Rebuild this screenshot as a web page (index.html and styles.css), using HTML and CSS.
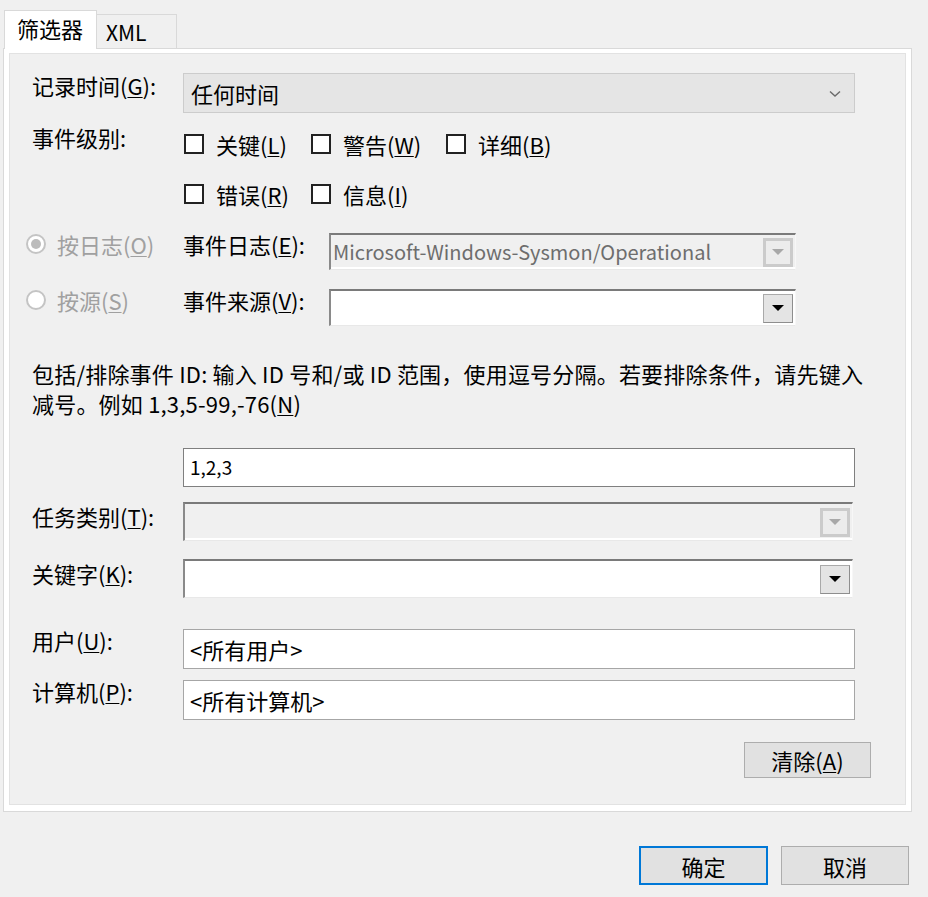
FILE: index.html
```html
<!DOCTYPE html>
<html lang="zh-CN">
<head>
    <meta charset="UTF-8">
    <meta name="viewport" content="width=device-width, initial-scale=1.0">
    <title>筛选当前日志</title>
    <link rel="stylesheet" href="styles.css">
</head>
<body>
    <div class="dialog">
        <div class="tabs">
            <div class="tab active">筛选器</div>
            <div class="tab">XML</div>
        </div>

        <div class="panel">
            <div class="content">
                <div class="row row-time">
                    <div class="label">记录时间(<u>G</u>):</div>
                    <div class="select">
                        <span class="select-text">任何时间</span>
                        <svg class="chevron" width="12" height="8" viewBox="0 0 12 8">
                            <polyline points="1,1.5 6,6 11,1.5" fill="none" stroke="#6a6a6a" stroke-width="1.4"/>
                        </svg>
                    </div>
                </div>

                <div class="row row-level">
                    <div class="label">事件级别:</div>
                    <div class="checks">
                        <div class="check-row">
                            <label class="check"><span class="box"></span><span>关键(<u>L</u>)</span></label>
                            <label class="check"><span class="box"></span><span>警告(<u>W</u>)</span></label>
                            <label class="check"><span class="box"></span><span>详细(<u>B</u>)</span></label>
                        </div>
                        <div class="check-row">
                            <label class="check"><span class="box"></span><span>错误(<u>R</u>)</span></label>
                            <label class="check"><span class="box"></span><span>信息(<u>I</u>)</span></label>
                        </div>
                    </div>
                </div>

                <div class="row row-source first">
                    <div class="radio"><span class="circle checked"></span><span>按日志(<u>O</u>)</span></div>
                    <div class="label sub">事件日志(<u>E</u>):</div>
                    <div class="combo log disabled">
                        <span class="combo-text">Microsoft-Windows-Sysmon/Operational</span>
                        <span class="drop">
                            <svg width="12" height="7" viewBox="0 0 12 7"><polygon points="0,0 12,0 6,6" fill="#a8a8a8"/></svg>
                        </span>
                    </div>
                </div>

                <div class="row row-source second">
                    <div class="radio"><span class="circle"></span><span>按源(<u>S</u>)</span></div>
                    <div class="label sub">事件来源(<u>V</u>):</div>
                    <div class="combo log">
                        <span class="combo-text"></span>
                        <span class="drop">
                            <svg width="12" height="7" viewBox="0 0 12 7"><polygon points="0,0 12,0 6,6" fill="#000"/></svg>
                        </span>
                    </div>
                </div>

                <p class="hint">包括/排除事件 ID: 输入 ID 号和/或 ID 范围，使用逗号分隔。若要排除条件，请先键入<br>减号。例如 1,3,5-99,-76(<u>N</u>)</p>

                <div class="row row-ids">
                    <div class="field ids">1,2,3</div>
                </div>

                <div class="row row-combo task">
                    <div class="label">任务类别(<u>T</u>):</div>
                    <div class="combo wide disabled">
                        <span class="combo-text"></span>
                        <span class="drop">
                            <svg width="12" height="7" viewBox="0 0 12 7"><polygon points="0,0 12,0 6,6" fill="#a8a8a8"/></svg>
                        </span>
                    </div>
                </div>

                <div class="row row-combo keyword">
                    <div class="label">关键字(<u>K</u>):</div>
                    <div class="combo wide">
                        <span class="combo-text"></span>
                        <span class="drop">
                            <svg width="12" height="7" viewBox="0 0 12 7"><polygon points="0,0 12,0 6,6" fill="#000"/></svg>
                        </span>
                    </div>
                </div>

                <div class="row row-text user">
                    <div class="label">用户(<u>U</u>):</div>
                    <div class="field">&lt;所有用户&gt;</div>
                </div>

                <div class="row row-text computer">
                    <div class="label">计算机(<u>P</u>):</div>
                    <div class="field">&lt;所有计算机&gt;</div>
                </div>

                <div class="row row-clear">
                    <button class="btn clear">清除(<u>A</u>)</button>
                </div>
            </div>
        </div>

        <div class="actions">
            <button class="btn default">确定</button>
            <button class="btn">取消</button>
        </div>
    </div>
</body>
</html>
```

FILE: styles.css
```css
body {
    margin: 0;
    background-color: #f0f0f0;
    font-family: "Microsoft YaHei UI", "Noto Sans CJK SC", sans-serif;
    font-size: 22px;
    color: #000;
}

u {
    text-decoration-thickness: 1px;
    text-underline-offset: 2px;
}

.dialog {
    width: 928px;
    height: 897px;
    padding-top: 9px;
    box-sizing: border-box;
}

/* tabs */
.tabs {
    display: flex;
    align-items: flex-end;
    height: 39px;
    margin-left: 4px;
}

.tab {
    box-sizing: border-box;
    height: 34px;
    padding: 0 10px;
    line-height: 34px;
    border: 1px solid #d9d9d9;
    border-bottom: none;
    background-color: #f0f0f0;
    font-size: 21px;
}

.tab.active {
    height: 39px;
    width: 93px;
    padding: 0 12px;
    line-height: 34px;
    background-color: #fff;
    font-size: 22px;
    position: relative;
    z-index: 1;
    margin-bottom: -1px;
}

.tab + .tab {
    width: 80px;
    border-left: none;
    padding-left: 9px;
}

.panel {
    margin-left: 3px;
    width: 909px;
    box-sizing: border-box;
    border: 1px solid #d9d9d9;
    background-color: #fff;
    padding: 4px 5px 6px 5px;
}

.content {
    border: 1px solid #e2e2e2;
    background-color: #f0f0f0;
    padding: 19px 0 26px 22px;
    display: flex;
    flex-direction: column;
}

/* rows */
.row {
    display: flex;
    align-items: flex-start;
}

.label {
    width: 151px;
    flex-shrink: 0;
    white-space: nowrap;
}

.row-time .label {
    line-height: 24px;
}

.select {
    box-sizing: border-box;
    width: 672px;
    height: 40px;
    display: flex;
    align-items: center;
    justify-content: space-between;
    padding: 0 13px 0 7px;
    background-color: #e5e5e5;
    border: 1px solid #cccccc;
}

.chevron {
    margin-top: 2px;
}

/* event level */
.row-level {
    margin-top: 15px;
}

.row-level .label {
    line-height: 18px;
}

.checks {
    display: flex;
    flex-direction: column;
    gap: 22px;
}

.check-row {
    display: grid;
    grid-template-columns: 127px 135px auto;
    height: 28px;
    margin-left: 1px;
}

.check {
    display: flex;
    align-items: center;
    gap: 12px;
    white-space: nowrap;
}

.box {
    box-sizing: border-box;
    width: 20px;
    height: 20px;
    border: 2px solid #222;
    background-color: #fff;
}

/* log / source */
.row-source {
    margin-left: -6px;
}

.row-source.first {
    margin-top: 27px;
}

.row-source.second {
    margin-top: 19px;
}

.radio {
    width: 157px;
    flex-shrink: 0;
    display: flex;
    align-items: center;
    gap: 11px;
    height: 22px;
    color: #a0a0a0;
    white-space: nowrap;
}

.circle {
    box-sizing: border-box;
    width: 20px;
    height: 20px;
    border: 2px solid #c4c4c4;
    border-radius: 50%;
    background-color: #fff;
    display: flex;
    align-items: center;
    justify-content: center;
}

.circle.checked::after {
    content: "";
    width: 10px;
    height: 10px;
    border-radius: 50%;
    background-color: #bcbcbc;
}

.label.sub {
    width: 146px;
    line-height: 22px;
}

.combo {
    box-sizing: border-box;
    height: 37px;
    display: flex;
    align-items: center;
    background-color: #fff;
    border-style: solid;
    border-width: 2px 1px 1px 2px;
    border-color: #7a7a7a #f7f7f7 #e8e8e8 #8a8a8a;
    box-shadow: inset 0 -2px 0 #fff;
    padding: 0 2px 0 2px;
}

.combo.log {
    width: 467px;
}

.combo.wide {
    width: 670px;
    height: 39px;
}

.combo.disabled {
    background-color: #f0f0f0;
    color: #6d6d6d;
}

.combo-text {
    flex: 1;
    white-space: nowrap;
    overflow: hidden;
    font-size: 20px;
    padding-bottom: 2px;
}

.drop {
    box-sizing: border-box;
    width: 30px;
    height: 29px;
    display: flex;
    align-items: center;
    justify-content: center;
    background-color: #e4e4e4;
    border: 1px solid #a9a9a9;
    border-right-color: #8e8e8e;
    border-bottom-color: #8e8e8e;
}

.disabled .drop {
    background-color: #ececec;
    border: 3px solid #cbcbcb;
}

/* hint */
.hint {
    margin: 32px 0 0 0;
    font-size: 22px;
    line-height: 30px;
    letter-spacing: 0.2px;
    white-space: nowrap;
}

.row-ids {
    margin-top: 30px;
    padding-left: 151px;
}

.field {
    box-sizing: border-box;
    width: 672px;
    height: 39px;
    background-color: #fff;
    border: 1px solid #7f7f7f;
    padding: 0 6px;
    line-height: 35px;
}

.field.ids {
    font-size: 19px;
}

.row-combo.task {
    margin-top: 15px;
}

.row-combo.keyword {
    margin-top: 18px;
}

.row-combo .label {
    line-height: 28px;
}

.row-text .field {
    height: 40px;
    line-height: 38px;
    border-color: #a6a6a6;
}

.row-text .label {
    line-height: 22px;
}

.row-text.user {
    margin-top: 31px;
}

.row-text.computer {
    margin-top: 11px;
}

/* buttons */
.btn {
    box-sizing: border-box;
    height: 36px;
    background-color: #e1e1e1;
    border: 1px solid #adadad;
    font-family: inherit;
    font-size: 22px;
    line-height: 30px;
    color: #000;
    padding: 0;
    cursor: pointer;
}

.row-clear {
    margin-top: 22px;
    justify-content: flex-end;
    padding-right: 34px;
}

.btn.clear {
    width: 127px;
}

.actions {
    display: flex;
    justify-content: flex-end;
    gap: 13px;
    margin-top: 34px;
    padding-right: 19px;
}

.actions .btn {
    width: 128px;
    height: 39px;
}

.btn.default {
    width: 129px;
    border: 2px solid #0078d7;
}
```
